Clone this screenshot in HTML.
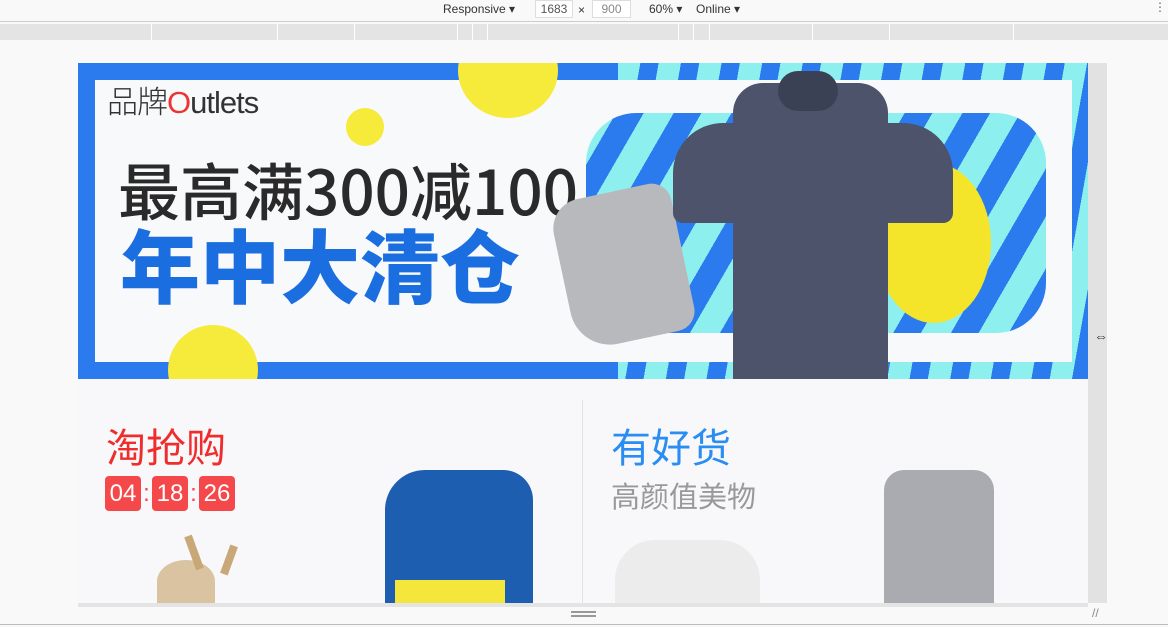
<!DOCTYPE html>
<html><head><meta charset="utf-8"><style>
*{margin:0;padding:0;box-sizing:border-box}
body{width:1168px;height:627px;background:#f9f9f9;position:relative;overflow:hidden;font-family:"Liberation Sans","Noto Sans CJK SC",sans-serif}
.a{position:absolute}
.cn{font-family:"Noto Sans CJK SC",sans-serif}
</style></head><body>
<div class="a" style="left:0;top:0;width:1168px;height:22px;background:#f9f9f9;border-bottom:1px solid #ccc;font-size:12px;color:#333">
 <span class="a" style="left:443px;top:2px">Responsive ▾</span>
 <span class="a" style="left:535px;top:0;width:38px;height:18px;border:1px solid #ddd;background:#fff;text-align:center;line-height:16px;color:#555">1683</span>
 <span class="a" style="left:578px;top:3px">×</span>
 <span class="a" style="left:592px;top:0;width:39px;height:18px;border:1px solid #ddd;background:#fff;text-align:center;line-height:16px;color:#888">900</span>
 <span class="a" style="left:649px;top:2px">60% ▾</span>
 <span class="a" style="left:696px;top:2px">Online ▾</span>
 <span class="a" style="left:1154px;top:0;color:#666">⋮</span>
</div>
<div class="a" style="left:0;top:24px;width:1168px;height:16px;background:#e4e4e4"></div>
<div class="a" style="left:151px;top:24px;width:1px;height:16px;background:#fff"></div>
<div class="a" style="left:277px;top:24px;width:1px;height:16px;background:#fff"></div>
<div class="a" style="left:354px;top:24px;width:1px;height:16px;background:#fff"></div>
<div class="a" style="left:457px;top:24px;width:1px;height:16px;background:#fff"></div>
<div class="a" style="left:472px;top:24px;width:1px;height:16px;background:#fff"></div>
<div class="a" style="left:487px;top:24px;width:1px;height:16px;background:#fff"></div>
<div class="a" style="left:678px;top:24px;width:1px;height:16px;background:#fff"></div>
<div class="a" style="left:693px;top:24px;width:1px;height:16px;background:#fff"></div>
<div class="a" style="left:709px;top:24px;width:1px;height:16px;background:#fff"></div>
<div class="a" style="left:812px;top:24px;width:1px;height:16px;background:#fff"></div>
<div class="a" style="left:889px;top:24px;width:1px;height:16px;background:#fff"></div>
<div class="a" style="left:1013px;top:24px;width:1px;height:16px;background:#fff"></div>

<div class="a" style="left:1088px;top:63px;width:19px;height:540px;background:#e2e2e2"></div>
<div class="a" style="left:78px;top:603px;width:1010px;height:4px;background:#e4e4e4"></div>
<div class="a" style="left:1094px;top:328px;font-size:14px;color:#333">⇔</div>
<div class="a" style="left:571px;top:611px;width:25px;height:2px;background:#999"></div>
<div class="a" style="left:571px;top:615px;width:25px;height:2px;background:#999"></div>
<div class="a" style="left:1092px;top:606px;font-size:12px;color:#888">//</div>
<div class="a" style="left:0;top:624px;width:1168px;height:1px;background:#bbb"></div>

<div class="a" style="left:78px;top:63px;width:1010px;height:316px;background:#2b7bef;overflow:hidden">
 <div class="a" style="left:540px;top:0;width:470px;height:316px;background:repeating-linear-gradient(100deg,#8ef0ee 0 22px,#2b7bef 22px 40px)"></div>
 <div class="a" style="left:17px;top:17px;width:977px;height:282px;background:#f8f9fb"></div>
 <div class="a" style="left:508px;top:50px;width:460px;height:220px;border-radius:50px;background:repeating-linear-gradient(120deg,#8ef0ee 0 26px,#2b7bef 26px 50px)"></div>
 <div class="a" style="left:798px;top:100px;width:115px;height:160px;border-radius:50%;background:#f4e52a"></div>
 <div class="a" style="left:380px;top:-40px;width:100px;height:95px;border-radius:50%;background:#f6ea3a"></div>
 <div class="a" style="left:268px;top:45px;width:38px;height:38px;border-radius:50%;background:#f6ea3a"></div>
 <div class="a" style="left:90px;top:262px;width:90px;height:90px;border-radius:50%;background:#f6ea3a"></div>
 <div class="a cn" style="left:29px;top:14px;font-size:31px;color:#333;letter-spacing:-1px;font-weight:300">品牌<span style="color:#e33;font-family:'Liberation Sans'">O</span><span style="font-family:'Liberation Sans'">utlets</span></div>
 <div class="a cn" style="left:40px;top:90px;font-size:62px;font-weight:500;color:#2a2a2a;line-height:70px;white-space:nowrap">最高满300减100</div>
 <div class="a cn" style="left:42px;top:160px;font-size:80px;font-weight:900;color:#1a6ee0;line-height:80px;white-space:nowrap">年中大清仓</div>
 <div class="a" style="left:484px;top:128px;width:122px;height:150px;background:#b8b9bd;border-radius:30px 20px 20px 40px;transform:rotate(-12deg)"></div>
 <div class="a" style="left:655px;top:20px;width:155px;height:296px;background:#4c536a;border-radius:30px 30px 0 0"></div>
 <div class="a" style="left:595px;top:60px;width:280px;height:100px;background:#4c536a;border-radius:50px 50px 10px 10px"></div>
 <div class="a" style="left:700px;top:8px;width:60px;height:40px;background:#3b4155;border-radius:20px"></div>
</div>

<div class="a" style="left:78px;top:379px;width:1010px;height:224px;background:#f8f8fa"></div>
<div class="a" style="left:582px;top:400px;width:1px;height:203px;background:#e2e2e2"></div>
<div class="a cn" style="left:106px;top:420px;font-size:40px;color:#f02d2d;line-height:50px">淘抢购</div>
<div class="a" style="left:105px;top:476px;display:flex;align-items:center;font-size:24px;color:#fff;font-family:'Liberation Sans'">
 <span style="background:#f5484a;border-radius:4px;width:36px;height:35px;text-align:center;line-height:35px">04</span><span style="color:#f5484a;width:11px;text-align:center">:</span>
 <span style="background:#f5484a;border-radius:4px;width:36px;height:35px;text-align:center;line-height:35px">18</span><span style="color:#f5484a;width:11px;text-align:center">:</span>
 <span style="background:#f5484a;border-radius:4px;width:36px;height:35px;text-align:center;line-height:35px">26</span>
</div>
<div class="a" style="left:157px;top:560px;width:58px;height:43px;border-radius:50% 50% 0 0;background:#d9c3a0"></div>
<div class="a" style="left:190px;top:535px;width:8px;height:35px;background:#c9a878;transform:rotate(-20deg)"></div>
<div class="a" style="left:225px;top:545px;width:8px;height:30px;background:#c9a878;transform:rotate(20deg)"></div>
<div class="a" style="left:385px;top:470px;width:148px;height:133px;background:#1e5eb0;border-radius:40px 30px 0 0"></div>
<div class="a" style="left:395px;top:580px;width:110px;height:23px;background:#f4e63a"></div>
<div class="a cn" style="left:611px;top:420px;font-size:40px;color:#2a8df2;line-height:50px">有好货</div>
<div class="a cn" style="left:611px;top:475px;font-size:29px;color:#999;line-height:40px">高颜值美物</div>
<div class="a" style="left:615px;top:540px;width:145px;height:63px;border-radius:40px 40px 0 0;background:#ececec"></div>
<div class="a" style="left:884px;top:470px;width:110px;height:133px;background:#a9abb1;border-radius:20px 20px 0 0"></div>
</body></html>
